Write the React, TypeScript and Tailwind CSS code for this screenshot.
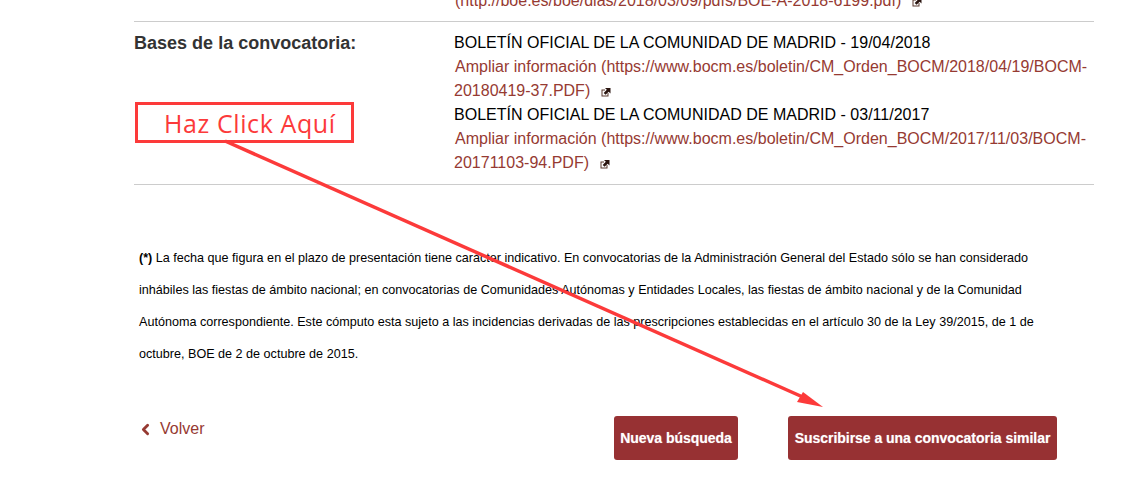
import React from 'react';
import { ChevronLeft } from 'lucide-react';

const sans = 'font-["Liberation_Sans",Arial,sans-serif]';

function ExternalIcon() {
  return (
    <svg width="10" height="10" viewBox="0 0 10 10" className="inline-block ml-[11px] align-[-1px]">
      <path d="M0.5 2.5H4V3.5H1.5V8.5H6.5V6H7.5V9.5H0.5Z" fill="#5a3a30" />
      <path d="M4 1H9.5V6.5L7.7 4.7L4.6 7.8L2.7 5.9L5.8 2.8Z" fill="#2a1510" />
    </svg>
  );
}

function Boletin({ title, href }: { title: string; href: [string, string] }) {
  return (
    <div>
      <p className="text-black">{title}</p>
      <p className="text-[#963a32]">
        <span className="ml-px">Ampliar información ({href[0]}</span>
        <br />
        {href[1]}
        <ExternalIcon />
      </p>
    </div>
  );
}

export default function App() {
  return (
    <div className={`relative h-[486px] w-[1125px] overflow-hidden bg-white ${sans}`}>
      <div className="ml-[134px] w-[960px] mt-[-11px] text-[16px] leading-6 tracking-[0.01px]">
        {/* corte de la fila anterior */}
        <div className="pl-[320px] pb-2 border-b border-[#cccccc] text-[#963a32]">
          <span className="ml-px">(http://boe.es/boe/dias/2018/03/09/pdfs/BOE-A-2018-6199.pdf)</span>
          <ExternalIcon />
        </div>

        <div className="flex pt-[9px] pb-[9px] border-b border-[#cccccc]">
          <div className="w-[320px] text-[18px] font-bold text-[#333333]">Bases de la convocatoria:</div>
          <div>
            <Boletin
              title="BOLETÍN OFICIAL DE LA COMUNIDAD DE MADRID - 19/04/2018"
              href={['https://www.bocm.es/boletin/CM_Orden_BOCM/2018/04/19/BOCM-', '20180419-37.PDF)']}
            />
            <Boletin
              title="BOLETÍN OFICIAL DE LA COMUNIDAD DE MADRID - 03/11/2017"
              href={['https://www.bocm.es/boletin/CM_Orden_BOCM/2017/11/03/BOCM-', '20171103-94.PDF)']}
            />
          </div>
        </div>

        <p className="mt-[57px] ml-[5px] w-[905px] text-[12.6px] leading-[32px] tracking-normal text-black">
          <b>(*)</b> La fecha que figura en el plazo de presentación tiene carácter indicativo. En convocatorias de la
          Administración General del Estado sólo se han considerado inhábiles las fiestas de ámbito nacional; en
          convocatorias de Comunidades Autónomas y Entidades Locales, las fiestas de ámbito nacional y de la Comunidad
          Autónoma correspondiente. Este cómputo esta sujeto a las incidencias derivadas de las prescripciones
          establecidas en el artículo 30 de la Ley 39/2015, de 1 de octubre, BOE de 2 de octubre de 2015.
        </p>

        <div className="flex items-start mt-[46px]">
          <a className="flex w-[70px] items-center ml-[3px] mt-[1px] text-[#963a32]">
            <ChevronLeft size={17} strokeWidth={4} className="mr-[6px] mt-[1px]" />
            Volver
          </a>
          <button className="ml-[407px] h-[44px] w-[124px] rounded-[3px] bg-[#973133] text-[14px] font-bold tracking-[-0.02px] text-white [text-shadow:0_0_1px_#ffffff80]">
            Nueva búsqueda
          </button>
          <button className="ml-[50px] h-[44px] w-[269px] rounded-[3px] bg-[#973133] text-[14px] font-bold tracking-[-0.03px] text-white [text-shadow:0_0_1px_#ffffff80]">
            Suscribirse a una convocatoria similar
          </button>
        </div>
      </div>

      {/* anotación sobre la captura */}
      <div className='absolute left-[135px] top-[102px] h-[41px] w-[219px] border-[3px] border-[#fc3a3a] pl-[26px] font-["Open_Sans",sans-serif] text-[25px] leading-[37px] tracking-[0.6px] text-[#fc3a3a]'>
        Haz Click Aquí
      </div>
      <svg className="absolute left-0 top-0 pointer-events-none" width="1125" height="486" viewBox="0 0 1125 486">
        <line x1="225" y1="141" x2="805" y2="398" stroke="#fc3a3a" strokeWidth="3.5" />
        <path d="M823 407L797 402L803 392Z" fill="#fc3a3a" />
      </svg>
    </div>
  );
}
